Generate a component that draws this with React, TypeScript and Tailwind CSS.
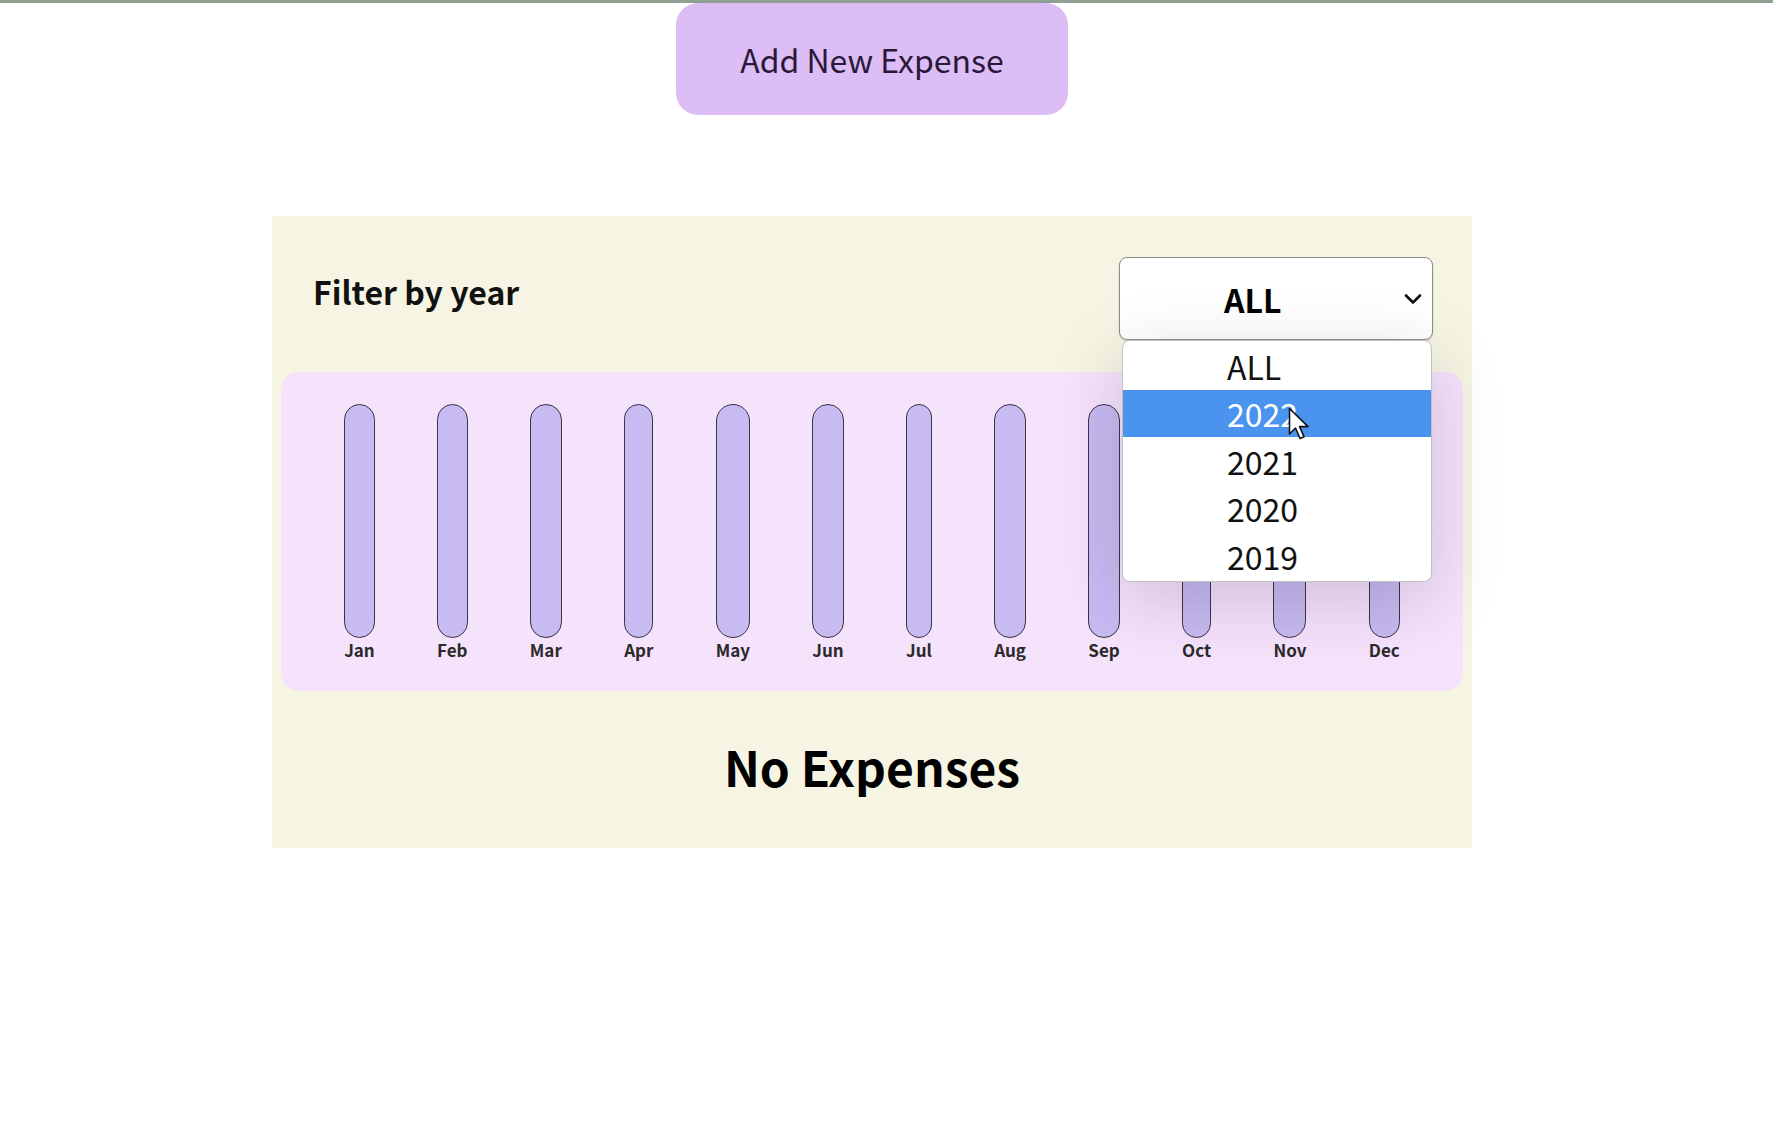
const months = ["Jan", "Feb", "Mar", "Apr", "May", "Jun", "Jul", "Aug", "Sep", "Oct", "Nov", "Dec"];
const years = ["ALL", "2022", "2021", "2020", "2019"];

const font = "font-['Noto_Sans_CJK_JP','Noto_Sans',sans-serif]";

const ChartBar = ({ label }: { label: string }) => (
    <div className="flex h-full flex-col items-center">
        <div className="w-full flex-1 rounded-full border border-[#3a3346] bg-[#c7bbf1]" />
        <span className="mt-[2px] text-[17px] font-bold leading-[20px] text-[#2a2a2a]">{label}</span>
    </div>
);

const YearSelect = () => (
    <div className="relative">
        <div className="flex h-[83px] w-[314px] items-center justify-between rounded-[8px] border border-[#8c8c8c] bg-white pl-[104px] pr-[10px] shadow-[0_1px_2px_rgba(0,0,0,0.15)]">
            <span className="text-[32px] font-bold leading-none text-black">ALL</span>
            <svg width="18" height="12" viewBox="0 0 18 12" fill="none">
                <path d="M2 2.5 L9 9.5 L16 2.5" stroke="#111" strokeWidth="2.6" strokeLinecap="round" strokeLinejoin="round" />
            </svg>
        </div>
        <div className="absolute left-[3px] top-full z-10 w-[310px] rounded-[8px] border border-[#c2c2c2] bg-white pb-[1px] pt-[1px] shadow-[0_18px_70px_rgba(40,20,60,0.18)]">
            {years.map((year) => (
                <div key={year} className={year === "2022" ? "flex h-[47.5px] items-center bg-[#4a94ef] pl-[104px] text-[32px] leading-none text-white" : "flex h-[47.5px] items-center pl-[104px] text-[32px] leading-none text-[#111]"}>
                    {year}
                </div>
            ))}
            <svg className="absolute left-[165px] top-[66px]" width="24" height="36" viewBox="0 0 24 36" fill="none">
                <path d="M1.5 1.5 L1.5 27 L7.5 21 L12 31.5 L16 29.8 L11.6 19.6 L20 19.6 Z" fill="white" stroke="#111" strokeWidth="1.6" strokeLinejoin="round" />
            </svg>
        </div>
    </div>
);

export default function App() {
    return (
        <div className={`min-h-screen w-full bg-white ${font}`}>
            <div className="h-[3px] w-full bg-[#8f9f92]" />
            <div className="flex w-[1744px] flex-col items-center">
                <button className="flex h-[112px] w-[392px] items-center justify-center rounded-[22px] bg-[#dcbdf6] text-[32px] leading-none text-[#2a1838]">
                    Add New Expense
                </button>

                <div className="mt-[101px] h-[632px] w-[1200px] bg-[#f6f5e3] px-[9px]">
                    <div className="mt-[41px] flex items-center justify-between pl-[32px] pr-[30px]">
                        <span className="mb-4 text-[32px] font-bold leading-none text-[#111]">Filter by year</span>
                        <YearSelect />
                    </div>

                    <div className="mt-[32px] flex h-[319px] justify-around rounded-[18px] bg-[#f5e2fb] px-[32px] pb-[31px] pt-[32px]">
                        {months.map((m) => (
                            <ChartBar key={m} label={m} />
                        ))}
                    </div>

                    <h2 className="mt-[46px] text-center text-[48px] font-bold leading-[58px] text-black">No Expenses</h2>
                </div>
            </div>
        </div>
    );
}
